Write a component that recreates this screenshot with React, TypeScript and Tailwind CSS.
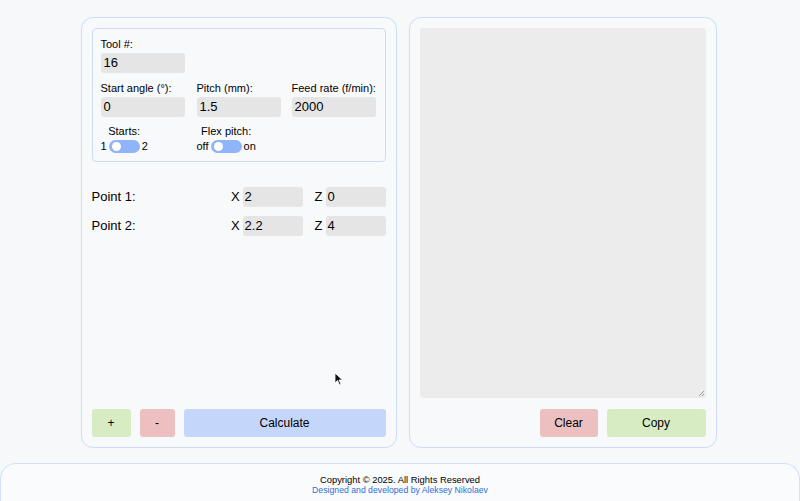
import React from "react";

function Toggle() {
  return (
    <span className="relative inline-block w-[31px] h-[13px] rounded-full bg-[#8fb5f8] mx-[2px]">
      <span className="absolute left-[3px] top-[2px] w-[9px] h-[9px] rounded-full bg-white" />
    </span>
  );
}

function Field({ label, value }: { label: string; value: string }) {
  return (
    <div className="flex flex-col">
      <label className="text-[11px] leading-[13px] text-black whitespace-nowrap">{label}</label>
      <div className="mt-[2px] w-[84px] h-[20px] rounded-[3px] bg-[#e5e5e5] px-[3px] text-[13px] leading-[20px] text-black">
        {value}
      </div>
    </div>
  );
}

function PointRow({ name, x, z }: { name: string; x: string; z: string }) {
  return (
    <div className="flex items-center justify-between h-[20px]">
      <span className="text-[13px] text-black">{name}</span>
      <div className="flex items-center">
        <span className="text-[13px] mr-[3px]">X</span>
        <div className="w-[60px] h-[20px] rounded-[3px] bg-[#e5e5e5] px-[2px] text-[13px] leading-[20px]">{x}</div>
        <span className="text-[13px] ml-[12px] mr-[3px]">Z</span>
        <div className="w-[60px] h-[20px] rounded-[3px] bg-[#e5e5e5] px-[2px] text-[13px] leading-[20px]">{z}</div>
      </div>
    </div>
  );
}

export default function App() {
  return (
    <div className="relative w-[800px] h-[501px] overflow-hidden bg-[#f7f8fa] font-['Liberation_Sans',Arial,sans-serif] text-black">
      <main className="flex justify-center gap-[12px] pt-[17px] pr-[3px]">
        {/* Left panel */}
        <section className="flex flex-col w-[316px] h-[431px] rounded-[12px] border border-[#cddcf7] bg-[#f8f9fb] p-[10px]">
          <div className="rounded-[4px] border border-[#cddcf7] h-[134px] pl-[8px] pt-[9px]">
            <Field label="Tool #:" value="16" />
            <div className="grid grid-cols-[96px_95px_84px] mt-[9px]">
              <Field label="Start angle (°):" value="0" />
              <Field label="Pitch (mm):" value="1.5" />
              <Field label="Feed rate (f/min):" value="2000" />
            </div>
            <div className="grid grid-cols-[96px_95px] mt-[8px] text-[11px] leading-[13px]">
              <div className="flex flex-col items-start">
                <div className="flex flex-col items-center">
                  <span>Starts:</span>
                  <div className="flex items-center mt-[2px]">
                    <span>1</span>
                    <Toggle />
                    <span>2</span>
                  </div>
                </div>
              </div>
              <div className="flex flex-col items-start">
                <div className="flex flex-col items-center">
                  <span>Flex pitch:</span>
                  <div className="flex items-center mt-[2px]">
                    <span>off</span>
                    <Toggle />
                    <span>on</span>
                  </div>
                </div>
              </div>
            </div>
          </div>

          <div className="flex flex-col gap-[9px] mt-[25px]">
            <PointRow name="Point 1:" x="2" z="0" />
            <PointRow name="Point 2:" x="2.2" z="4" />
          </div>

          <div className="flex-1" />

          <div className="flex gap-[9px] text-[12px]">
            <button className="w-[39px] h-[28px] rounded-[3px] bg-[#d8ecc4]">+</button>
            <button className="w-[35px] h-[28px] rounded-[3px] bg-[#ecc0c1]">-</button>
            <button className="flex-1 h-[28px] rounded-[3px] bg-[#c4d7fa]">Calculate</button>
          </div>
        </section>

        {/* Right panel */}
        <section className="flex flex-col w-[308px] h-[431px] rounded-[12px] border border-[#cddcf7] bg-[#f8f9fb] p-[10px]">
          <div className="relative h-[370px] rounded-[3px] bg-[#ececec]">
            <svg className="absolute right-[1px] bottom-[1px]" width="7" height="7" viewBox="0 0 7 7">
              <path d="M6 1 L1 6 M6 4 L4 6" stroke="#999" strokeWidth="1" />
            </svg>
          </div>
          <div className="flex justify-end gap-[9px] mt-[11px] text-[12px]">
            <button className="w-[58px] h-[28px] rounded-[3px] bg-[#ecc0c1]">Clear</button>
            <button className="w-[99px] h-[28px] rounded-[3px] bg-[#d8ecc4]">Copy</button>
          </div>
        </section>
      </main>

      <footer className="mt-[15px] h-[60px] rounded-t-[16px] border-t border-x border-[#d3e1f8] bg-[#fafbfc] pt-[10px] text-center leading-[11px]">
        <div className="text-black text-[9.4px]">Copyright © 2025. All Rights Reserved</div>
        <div className="text-[#2f6fd6] text-[8.7px]">Designed and developed by Aleksey Nikolaev</div>
      </footer>

      <svg className="absolute left-[334px] top-[372px]" width="10" height="14" viewBox="0 0 10 14">
        <path d="M1 1 L1 11 L3.5 8.5 L5.5 13 L7 12.3 L5 8 L8.5 8 Z" fill="#111" stroke="#fff" strokeWidth="0.8" />
      </svg>
    </div>
  );
}
